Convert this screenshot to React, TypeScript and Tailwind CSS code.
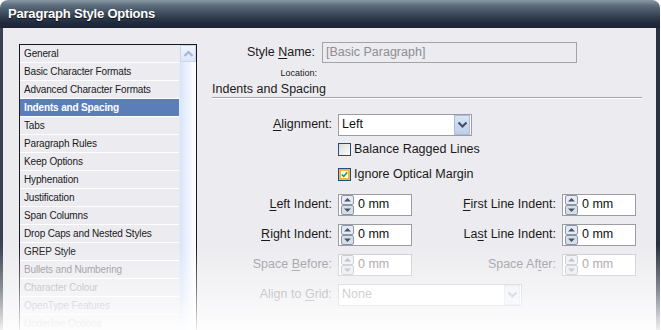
const items = [
  'General',
  'Basic Character Formats',
  'Advanced Character Formats',
  'Indents and Spacing',
  'Tabs',
  'Paragraph Rules',
  'Keep Options',
  'Hyphenation',
  'Justification',
  'Span Columns',
  'Drop Caps and Nested Styles',
  'GREP Style',
  'Bullets and Numbering',
  'Character Colour',
  'OpenType Features',
  'Underline Options',
]

function Spinner({ disabled }: { disabled?: boolean }) {
  const stroke = disabled ? '#c6cad2' : '#8a95a8'
  const arrow = disabled ? '#b4b9c2' : '#4b5566'
  return (
    <svg width="13" height="20" viewBox="0 0 13 20">
      <rect x="0.5" y="0.5" width="12" height="9" rx="1.5" fill={disabled ? '#f0f1f4' : '#e6ebf3'} stroke={stroke} />
      <rect x="0.5" y="10.5" width="12" height="9" rx="1.5" fill={disabled ? '#eceef2' : '#d6deea'} stroke={stroke} />
      <path d="M3 6.5 L6.5 3 L10 6.5 Z" fill={arrow} />
      <path d="M3 13.5 L6.5 17 L10 13.5 Z" fill={arrow} />
    </svg>
  )
}

function NumField({ disabled }: { disabled?: boolean }) {
  return (
    <div
      className={`w-[74px] h-[22px] bg-white border flex items-center pl-[2px] ${
        disabled ? 'border-[#cdcdd2] text-[#9c9ca0]' : 'border-[#9c9ca2] text-[#111]'
      }`}
    >
      <Spinner disabled={disabled} />
      <span className="ml-[4px]">0 mm</span>
    </div>
  )
}

function Label({ pre, key1, post, disabled, w }: { pre: string; key1: string; post: string; disabled?: boolean; w: string }) {
  return (
    <div className={`${w} text-right pr-[6px] ${disabled ? 'text-[#98989c]' : 'text-[#1a1a1a]'}`}>
      {pre}
      <span className="underline underline-offset-2">{key1}</span>
      {post}
    </div>
  )
}

function Chevron({ color }: { color: string }) {
  return (
    <svg width="11" height="8" viewBox="0 0 11 8">
      <path d="M1.5 1.5 L5.5 5.5 L9.5 1.5" fill="none" stroke={color} strokeWidth="2.2" />
    </svg>
  )
}

function Check({ checked }: { checked?: boolean }) {
  return (
    <div className="w-[13px] h-[13px] border border-[#1c4f80] bg-[linear-gradient(135deg,#dcdcd8,#fcfcfc)] flex items-center justify-center">
      {checked && (
        <div className="w-[11px] h-[11px] border-2 border-[#f6b43a] bg-white flex items-center justify-center">
          <svg width="9" height="9" viewBox="0 0 9 9">
            <path d="M1 4.5 L3.5 7 L8 1.5" fill="none" stroke="#21a121" strokeWidth="2" />
          </svg>
        </div>
      )}
    </div>
  )
}

export default function App() {
  return (
    <div className="relative w-[661px] h-[330px] overflow-hidden bg-white font-['Liberation_Sans',sans-serif]">
      <div className="w-[660px] h-[330px] flex flex-col">
        {/* title bar */}
        <div className="h-[28px] shrink-0 rounded-t-[8px] bg-[linear-gradient(to_bottom,#8a98a6_0%,#5d6c7c_20%,#3c4a5c_50%,#222c3e_80%,#1c2434_100%)] flex items-center pl-[8px]">
          <span className="text-white font-bold text-[13px] tracking-[-0.2px] [text-shadow:0_1px_1px_rgba(0,0,0,0.7)]">Paragraph Style Options</span>
        </div>

        {/* body */}
        <div className="flex-1 min-h-0 bg-[#ecebef] border-l-[3px] border-r-[4px] border-l-[#3a4150] border-r-[#2a3242] flex">
          {/* list */}
          <div className="ml-[16px] mt-[16px] w-[178px] border border-[#1a1a1a] flex h-[300px] shrink-0">
            <div className="flex-1 flex flex-col bg-[#ecebf0]">
              {items.map((t, i) => {
                const sel = i === 3
                const color = sel
                  ? 'text-white font-bold bg-[#5b7ebb]'
                  : i < 12
                  ? 'text-[#1a1a1a]'
                  : i === 12
                  ? 'text-[#8c8c8c]'
                  : 'text-[#a8a8aa]'
                return (
                  <div
                    key={t}
                    className={`h-[18px] shrink-0 border-b border-white pl-[4px] flex items-center text-[10px] tracking-[-0.15px] ${color}`}
                  >
                    {t}
                  </div>
                )
              })}
            </div>
            <div className="w-[17px] bg-[linear-gradient(to_right,#d8e5f8,#f4f8fe_70%,#ffffff)] border-l border-[#e4ecf8]">
              <div className="h-[17px] border border-[#c9d7ee] bg-[linear-gradient(to_bottom,#f0f5fd,#dbe6f6)] flex items-center justify-center">
                <svg width="11" height="8" viewBox="0 0 11 8">
                  <path d="M1.5 6 L5.5 2 L9.5 6" fill="none" stroke="#a5b7d6" strokeWidth="2.2" />
                </svg>
              </div>
            </div>
          </div>

          {/* right panel */}
          <div className="ml-[15px] w-[430px] flex flex-col text-[12.5px]">
            <div className="mt-[14px] flex items-center h-[21px]">
              <div className="w-[110px] text-right pr-[7px] text-[#1a1a1a]">
                Style <span className="underline underline-offset-2">N</span>ame:
              </div>
              <div className="w-[255px] h-[21px] border border-[#a4a4a8] flex items-center pl-[3px] text-[#8e8e92]">
                [Basic Paragraph]
              </div>
            </div>
            <div className="mt-[4px] w-[105px] text-right text-[9px] text-[#1a1a1a]">Location:</div>
            <div className="mt-[1px] text-[#1a1a1a] leading-[14px]">Indents and Spacing</div>
            <div className="mt-[1px] h-[2px] border-t border-[#a6a6aa] bg-white" />

            <div className="mt-[15px] flex items-center h-[22px]">
              <Label w="w-[126px]" pre="" key1="A" post="lignment:" />
              <div className="w-[134px] h-[22px] bg-white border border-[#9c9ca2] flex items-center">
                <span className="flex-1 pl-[3px] text-[#111]">Left</span>
                <div className="w-[16px] h-[20px] mr-[1px] border border-[#a8bcdc] bg-[linear-gradient(to_bottom,#dae5f5,#bccee9)] flex items-center justify-center">
                  <Chevron color="#3d5170" />
                </div>
              </div>
            </div>

            <div className="mt-[7px] ml-[126px] flex items-center h-[14px] gap-[3px] text-[#1a1a1a]">
              <Check />
              <span>Balance Ragged Lines</span>
            </div>
            <div className="mt-[11px] ml-[126px] flex items-center h-[14px] gap-[3px] text-[#1a1a1a]">
              <Check checked />
              <span>Ignore Optical Margin</span>
            </div>

            <div className="mt-[12px] flex items-center h-[22px]">
              <Label w="w-[126px]" pre="" key1="L" post="eft Indent:" />
              <NumField />
              <Label w="w-[150px]" pre="" key1="F" post="irst Line Indent:" />
              <NumField />
            </div>
            <div className="mt-[8px] flex items-center h-[22px]">
              <Label w="w-[126px]" pre="" key1="R" post="ight Indent:" />
              <NumField />
              <Label w="w-[150px]" pre="La" key1="s" post="t Line Indent:" />
              <NumField />
            </div>
            <div className="mt-[8px] flex items-center h-[22px]">
              <Label w="w-[126px]" pre="Space " key1="B" post="efore:" disabled />
              <NumField disabled />
              <Label w="w-[150px]" pre="Space Af" key1="t" post="er:" disabled />
              <NumField disabled />
            </div>
            <div className="mt-[8px] flex items-center h-[22px]">
              <Label w="w-[126px]" pre="Align to " key1="G" post="rid:" disabled />
              <div className="w-[184px] h-[22px] bg-white border border-[#cfcfd4] flex items-center">
                <span className="flex-1 pl-[3px] text-[#a4a4a8]">None</span>
                <div className="w-[16px] h-[20px] mr-[1px] border border-[#dfe5ee] bg-[#eef1f6] flex items-center justify-center">
                  <Chevron color="#b8c0cc" />
                </div>
              </div>
            </div>
          </div>
        </div>
      </div>

      {/* bottom fade */}
      <div className="absolute inset-x-0 bottom-0 h-[85px] pointer-events-none bg-[linear-gradient(to_bottom,rgba(255,255,255,0),rgba(255,255,255,0.4)_50%,rgba(255,255,255,0.92))]" />
    </div>
  )
}
